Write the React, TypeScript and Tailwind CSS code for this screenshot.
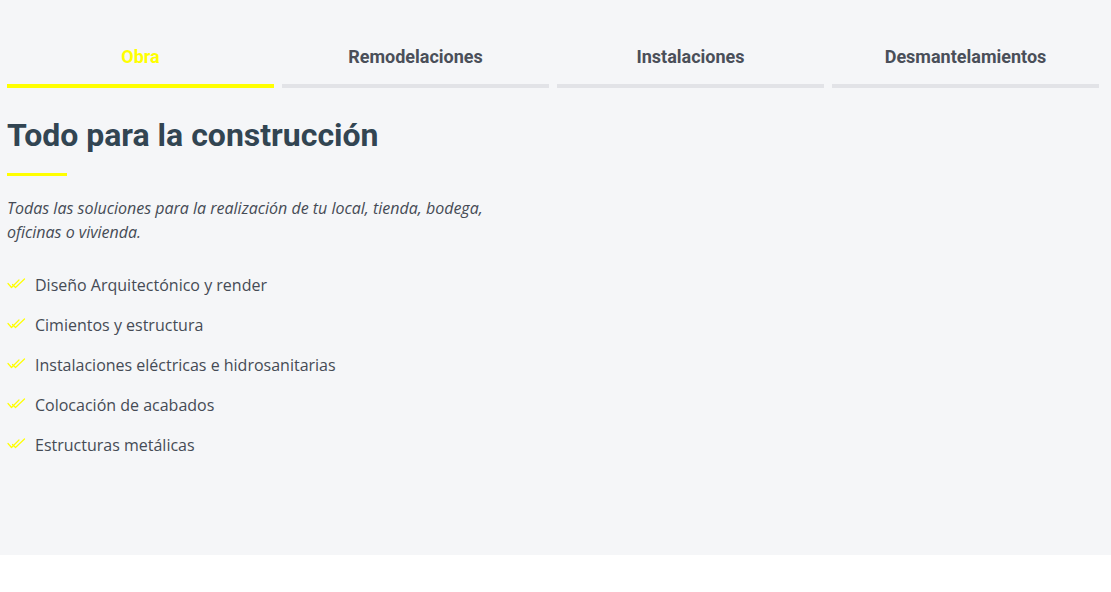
import React, { useState } from 'react';

const tabs = ['Obra', 'Remodelaciones', 'Instalaciones', 'Desmantelamientos'];

const items = [
  'Diseño Arquitectónico y render',
  'Cimientos y estructura',
  'Instalaciones eléctricas e hidrosanitarias',
  'Colocación de acabados',
  'Estructuras metálicas',
];

const DoubleCheck = () => (
  <svg width="19" height="11" viewBox="0 0 19 11" fill="none" stroke="#ffff00" strokeWidth="1.2" strokeLinecap="round" strokeLinejoin="round" className="shrink-0">
    <path d="M1 5.5 L4.5 9.5 L12 2" />
    <path d="M5.5 6.5 L8.5 9.5 L17.5 1" />
  </svg>
);

const App = () => {
  const [active, setActive] = useState(0);

  return (
    <div className="bg-white min-h-[592px]">
      <div className="bg-[#f5f6f8] pt-[45px] pb-[98px] pl-[7px] pr-[12px]">
        {/* Tabs */}
        <div className="grid grid-cols-4 gap-[8px]">
          {tabs.map((tab, i) => (
            <button
              key={tab}
              onClick={() => setActive(i)}
              className={`flex flex-col items-center font-['Roboto',sans-serif] text-[18px] font-bold leading-[24px] ${active === i ? 'text-[#ffff00]' : 'text-[#4a4f59]'}`}
            >
              <span className="pb-[15px]">{tab}</span>
              <span className={`block w-full h-[4px] ${active === i ? 'bg-[#ffff00]' : 'bg-[#e2e3e7]'}`} />
            </button>
          ))}
        </div>

        {/* Content */}
        <div className="mt-[28px]">
          <h2 className="font-['Roboto',sans-serif] text-[32px] font-bold leading-[38px] text-[#324552]">
            Todo para la construcción
          </h2>
          <div className="mt-[19px] w-[60px] h-[3px] bg-[#ffff00]" />
          <p className="mt-[20px] w-[510px] font-['Open_Sans',sans-serif] italic text-[16px] leading-[24px] text-[#454b55]">
            Todas las soluciones para la realización de tu local, tienda, bodega, oficinas o vivienda.
          </p>
          <ul className="mt-[29px] flex flex-col gap-[16px]">
            {items.map((item) => (
              <li key={item} className="flex items-center gap-[9px] font-['Open_Sans',sans-serif] text-[16px] leading-[24px] text-[#454b55]">
                <span className="-mt-[3px]">
                  <DoubleCheck />
                </span>
                <span>{item}</span>
              </li>
            ))}
          </ul>
        </div>
      </div>
    </div>
  );
};

export default App;
